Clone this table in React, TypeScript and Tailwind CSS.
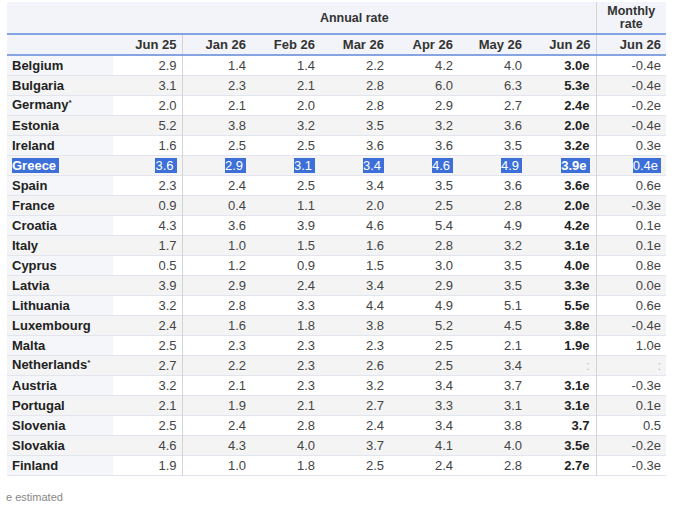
import React from "react";

type Row = {
  name: string;
  star?: boolean;
  values: string[];
  latest: string;
  monthly: string;
};

const rows: Row[] = [
  { name: "Belgium", values: ["2.9", "1.4", "1.4", "2.2", "4.2", "4.0"], latest: "3.0e", monthly: "-0.4e" },
  { name: "Bulgaria", values: ["3.1", "2.3", "2.1", "2.8", "6.0", "6.3"], latest: "5.3e", monthly: "-0.4e" },
  { name: "Germany", star: true, values: ["2.0", "2.1", "2.0", "2.8", "2.9", "2.7"], latest: "2.4e", monthly: "-0.2e" },
  { name: "Estonia", values: ["5.2", "3.8", "3.2", "3.5", "3.2", "3.6"], latest: "2.0e", monthly: "-0.4e" },
  { name: "Ireland", values: ["1.6", "2.5", "2.5", "3.6", "3.6", "3.5"], latest: "3.2e", monthly: "0.3e" },
  { name: "Greece", values: ["3.6", "2.9", "3.1", "3.4", "4.6", "4.9"], latest: "3.9e", monthly: "0.4e" },
  { name: "Spain", values: ["2.3", "2.4", "2.5", "3.4", "3.5", "3.6"], latest: "3.6e", monthly: "0.6e" },
  { name: "France", values: ["0.9", "0.4", "1.1", "2.0", "2.5", "2.8"], latest: "2.0e", monthly: "-0.3e" },
  { name: "Croatia", values: ["4.3", "3.6", "3.9", "4.6", "5.4", "4.9"], latest: "4.2e", monthly: "0.1e" },
  { name: "Italy", values: ["1.7", "1.0", "1.5", "1.6", "2.8", "3.2"], latest: "3.1e", monthly: "0.1e" },
  { name: "Cyprus", values: ["0.5", "1.2", "0.9", "1.5", "3.0", "3.5"], latest: "4.0e", monthly: "0.8e" },
  { name: "Latvia", values: ["3.9", "2.9", "2.4", "3.4", "2.9", "3.5"], latest: "3.3e", monthly: "0.0e" },
  { name: "Lithuania", values: ["3.2", "2.8", "3.3", "4.4", "4.9", "5.1"], latest: "5.5e", monthly: "0.6e" },
  { name: "Luxembourg", values: ["2.4", "1.6", "1.8", "3.8", "5.2", "4.5"], latest: "3.8e", monthly: "-0.4e" },
  { name: "Malta", values: ["2.5", "2.3", "2.3", "2.3", "2.5", "2.1"], latest: "1.9e", monthly: "1.0e" },
  { name: "Netherlands", star: true, values: ["2.7", "2.2", "2.3", "2.6", "2.5", "3.4"], latest: ":", monthly: ":" },
  { name: "Austria", values: ["3.2", "2.1", "2.3", "3.2", "3.4", "3.7"], latest: "3.1e", monthly: "-0.3e" },
  { name: "Portugal", values: ["2.1", "1.9", "2.1", "2.7", "3.3", "3.1"], latest: "3.1e", monthly: "0.1e" },
  { name: "Slovenia", values: ["2.5", "2.4", "2.8", "2.4", "3.4", "3.8"], latest: "3.7", monthly: "0.5" },
  { name: "Slovakia", values: ["4.6", "4.3", "4.0", "3.7", "4.1", "4.0"], latest: "3.5e", monthly: "-0.2e" },
  { name: "Finland", values: ["1.9", "1.0", "1.8", "2.5", "2.4", "2.8"], latest: "2.7e", monthly: "-0.3e" },
];

const months = ["Jun 25", "Jan 26", "Feb 26", "Mar 26", "Apr 26", "May 26", "Jun 26"];

function cx(...parts: string[]) {
  return parts.filter(Boolean).join(" ");
}

function Cell({ text, selected, bold }: { text: string; selected: boolean; bold?: boolean }) {
  if (text === ":") return <span className="text-[#b8b8b8]">:</span>;
  return (
    <span className={cx(bold ? "font-bold text-[#222]" : "", selected ? "bg-[#3d6fd8] pr-[3px] text-white" : "")}>
      {text}
    </span>
  );
}

export default function App() {
  return (
    <div className="h-[507px] w-[680px] bg-white font-['Liberation_Sans',Arial,sans-serif] text-[#444]">
      <div className="pl-[7px] pt-[2px]">
        <table className="w-[659px] table-fixed border-collapse text-[13px] leading-[15px]">
          <colgroup>
            <col className="w-[106px]" />
            {months.map((m) => (
              <col key={m} className="w-[69px]" />
            ))}
            <col className="w-[70px]" />
          </colgroup>
          <thead>
            <tr className="h-[32px] border-b-2 border-[#86a3e2] bg-[#f2f4f9] text-[#333]">
              <th />
              <th colSpan={7} className="pt-[2px] text-center text-[12.5px] font-bold">Annual rate</th>
              <th className="border-l border-[#d4d4d4] text-center text-[12.5px] font-bold leading-[13px]">
                Monthly
                <br />
                rate
              </th>
            </tr>
            <tr className="h-[21px] border-b-2 border-[#86a3e2] bg-[#f2f4f9] text-[#333]">
              <th />
              {months.map((m, i) => (
                <th
                  key={m + i}
                  className={cx("pr-[5px] text-right font-bold", i === 0 || i === 6 ? "border-r border-[#d4d4d4]" : "")}
                >
                  {m}
                </th>
              ))}
              <th className="pr-[5px] text-right font-bold">Jun 26</th>
            </tr>
          </thead>
          <tbody>
            {rows.map((row, r) => {
              const selected = row.name === "Greece";
              const gray = r % 2 === 1;
              return (
                <tr key={row.name} className={cx("h-[20px] border-b border-[#e2e5ef]", gray ? "bg-[#f4f4f4]" : "bg-white")}>
                  <td className={cx("pl-[5px] font-bold text-[#222]", gray ? "" : "bg-[#f5f6f9]")}>
                    <span className={selected ? "bg-[#3d6fd8] pr-[3px] text-white" : ""}>{row.name}</span>
                    {row.star ? <span className="relative top-[-4px] text-[8px]">*</span> : null}
                  </td>
                  {row.values.map((v, i) => (
                    <td key={i} className={cx("pr-[5px] text-right", i === 0 ? "border-r border-[#d4d4d4]" : "")}>
                      <Cell text={v} selected={selected} />
                    </td>
                  ))}
                  <td className="border-r border-[#d4d4d4] pr-[6px] text-right">
                    <Cell text={row.latest} selected={selected} bold />
                  </td>
                  <td className="pr-[5px] text-right">
                    <Cell text={row.monthly} selected={selected} />
                  </td>
                </tr>
              );
            })}
          </tbody>
        </table>
      </div>
      <p className="mt-[13px] pl-[6px] text-[11px] text-[#888]">e estimated</p>
    </div>
  );
}
